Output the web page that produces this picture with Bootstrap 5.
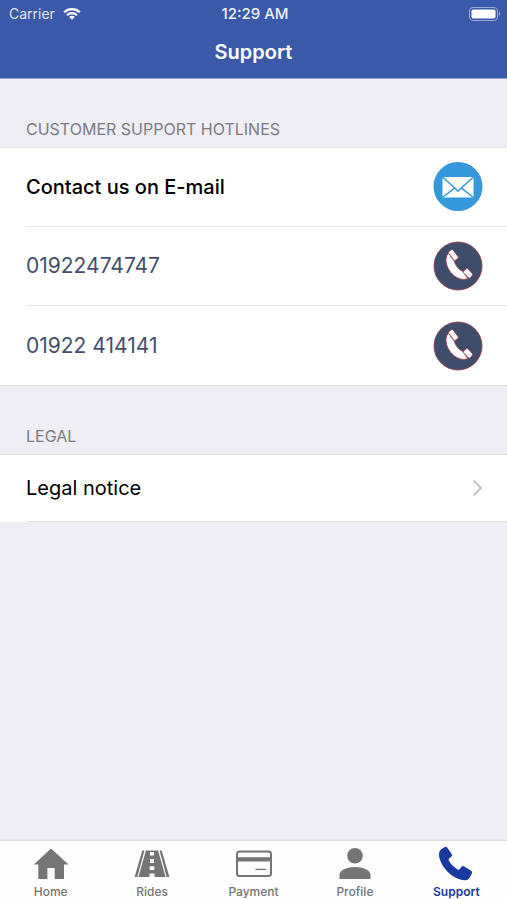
<!DOCTYPE html>
<html lang="en">
<head>
<meta charset="utf-8">
<meta name="viewport" content="width=device-width, initial-scale=1">
<title>Support</title>
<link href="https://cdn.jsdelivr.net/npm/bootstrap@5.3.0/dist/css/bootstrap.min.css" rel="stylesheet">
<style>
body { font-family: Inter, "Liberation Sans", sans-serif; background: #efeef4; color: #000; }
.app-top { background: #3a59a9; color: #fff; border-bottom: 1px solid #8f9fd0; }
.status-line { height: 28px; padding: 0 6px 0 9px; font-size: 14px; line-height: 28px; }
.status-line .carrier { color: #dfe5f6; }
.status-line .clock { font-size: 15px; font-weight: 500; color: #eef2fc; }
.screen-title { font-size: 20px; line-height: 24px; font-weight: 600; padding: 12px 0 14px; }
.group-title { font-size: 16px; line-height: 20px; font-weight: 400; color: #7c7c82; padding: 40px 26px 8px; margin: 0; }
.group-box { background: #fff; border-top: 1px solid #e2e2e6; }
.group-box a { display: block; padding-left: 26px; color: #000; text-decoration: none; font-size: 20px; line-height: 24px; }
.row-inner { height: 79px; padding-right: 24px; border-bottom: 1px solid #e6e6e8; }
.group-full li:last-child .row-inner { border-bottom: 0; }
.group-full { border-bottom: 1px solid #e2e2e6; }
.group-box .row-short { height: 67px; }
.group-box .row-email { font-weight: 500; }
.group-box a.phone { color: #444f70; font-size: 21px; }
.tabs { background: #fdfdfd; border-top: 1px solid #dcdce0; box-shadow: 0 -1px 1px #e6e6ea; }
.tabs a { color: #757575; text-decoration: none; font-size: 12px; line-height: 14px; font-weight: 500; padding: 5px 0 1px; }
.tabs a.active { color: #1739a0; font-weight: 600; }
.tabs svg { display: block; }
</style>
<script src="https://cdn.jsdelivr.net/npm/bootstrap@5.3.0/dist/js/bootstrap.bundle.min.js"></script>
</head>
<body class="d-flex flex-column min-vh-100">
<header class="app-top">
  <div class="status-line row g-0 align-items-center">
    <div class="col d-flex align-items-center gap-2">
      <span class="carrier">Carrier</span>
      <svg width="18" height="14" viewBox="0 0 18 14" fill="none" stroke="#fff" stroke-width="2.3" role="img" aria-label="Wi-Fi"><path d="M1.2 5.2a11.3 11.3 0 0 1 15.6 0M4 8.200a7.100 7.100 0 0 1 10 0"/><path d="M9 12.800 6.200 10a4 4 0 0 1 5.600 0z" fill="#fff" stroke="none"/></svg>
    </div>
    <div class="col-auto clock">12:29 AM</div>
    <div class="col d-flex justify-content-end">
      <svg width="32" height="14" viewBox="0 0 32 14" role="img" aria-label="Battery full"><rect x=".5" y=".5" width="28" height="13" rx="3.5" fill="none" stroke="#97a8d6"/><rect x="2.500" y="2.500" width="24" height="9" rx="1.800" fill="#fff"/><path d="M30 4.800c1.700.5 1.700 3.900 0 4.400z" fill="#97a8d6"/></svg>
    </div>
  </div>
  <h1 class="screen-title text-center m-0">Support</h1>
</header>

<main class="flex-grow-1">
  <h2 class="group-title">CUSTOMER SUPPORT HOTLINES</h2>
  <ul class="group-box group-full list-unstyled m-0">
    <li><a class="row-email" href="#email"><span class="row-inner d-flex align-items-center justify-content-between"><span>Contact us on E-mail</span>
      <svg width="50" height="50" viewBox="0 0 50 50" aria-hidden="true"><circle cx="25" cy="24.500" r="24.500" fill="#3498db"/><rect x="9.500" y="15" width="31" height="20.500" fill="#fff"/><path d="M9.500 15 22 26.300l3 2.900 3-2.900L40.500 15M9.500 35.500l12.300-9.700M40.500 35.500 28.200 25.800" fill="none" stroke="#3498db" stroke-width="1.500"/></svg></span></a></li>
    <li><a class="phone" href="tel:01922474747"><span class="row-inner d-flex align-items-center justify-content-between"><span>01922474747</span>
      <svg width="50" height="50" viewBox="0 0 50 50" aria-hidden="true"><circle cx="25" cy="25" r="24" fill="#3d4d6b" stroke="#91404f" stroke-width=".9"/><g id="handset" fill="#fff" stroke="#a63c4a" stroke-width=".8"><path d="M15.500 12.300C11.200 16.500 12.800 25.300 17.600 31.200c4.800 5.700 11.800 8.800 17.200 6.400l-5.100-7.300c-3.200-.8-7.800-6.200-8.300-10z"/><path d="m16 10.400 2-1.500q1.200-.8 2.100.3l4.900 6.400q.8 1.200-.4 2.100l-2 1.500q-1 .6-1.800-.4l-5.100-6.400q-.7-1 .3-2zM30.700 30l2.200-2.100q1.200-.9 2.200 0l4 4.600q.8 1.200-.1 2.200l-1.900 2.100q-1 .8-1.900-.1l-4.600-4.900q-.8-.9.1-1.800z"/></g></svg></span></a></li>
    <li><a class="phone" href="tel:01922414141"><span class="row-inner d-flex align-items-center justify-content-between"><span>01922 414141</span>
      <svg width="50" height="50" viewBox="0 0 50 50" aria-hidden="true"><circle cx="25" cy="25" r="24" fill="#3d4d6b" stroke="#91404f" stroke-width=".9"/><use href="#handset"/></svg></span></a></li>
  </ul>

  <h2 class="group-title">LEGAL</h2>
  <ul class="group-box list-unstyled m-0">
    <li><a href="#legal"><span class="row-inner row-short d-flex align-items-center justify-content-between"><span>Legal notice</span>
      <svg width="11" height="18" viewBox="0 0 11 18" fill="none" stroke="#c4c4c8" stroke-width="2" aria-hidden="true"><path d="m1.500 1.500 7.500 7.500-7.500 7.500"/></svg></span></a></li>
  </ul>
</main>

<nav class="tabs sticky-bottom row g-0 text-center" aria-label="Main">
  <a class="col d-flex flex-column align-items-center" href="#home"><svg width="36" height="39" viewBox="0 0 36 39" fill="currentColor" aria-hidden="true"><path d="M18 2.500 35.500 18.500H31V33H21.700V22h-7.300v11H5.300V18.500H.8z"/></svg>Home</a>
  <a class="col d-flex flex-column align-items-center" href="#rides"><svg width="36" height="39" viewBox="0 0 36 39" fill="currentColor" aria-hidden="true"><path d="M8.300 4.500h2.200L3.300 31H.6zM25.500 4.500h2.200L35.400 31h-2.700zM11.900 4.500h12.200L31.600 31H4.400z"/><g fill="#fdfdfd"><rect x="16" y="6" width="4" height="3.500"/><rect x="16" y="13" width="4" height="3.800"/><rect x="15.700" y="20.300" width="4.600" height="3.700"/><rect x="15.500" y="27.500" width="5" height="3.500"/></g></svg>Rides</a>
  <a class="col d-flex flex-column align-items-center" href="#payment"><svg width="36" height="39" viewBox="0 0 36 39" fill="none" stroke="currentColor" aria-hidden="true"><rect x="1" y="5.500" width="34" height="24.500" rx="2.500" stroke-width="2"/><path d="M1 13.400h34" stroke-width="4.200"/><path d="M19.500 23.400H30" stroke-width="1.300"/></svg>Payment</a>
  <a class="col d-flex flex-column align-items-center" href="#profile"><svg width="36" height="39" viewBox="0 0 36 39" fill="currentColor" aria-hidden="true"><circle cx="18" cy="9.800" r="7.800"/><path d="M2.500 33v-4.200c0-5 8-7.800 15.500-7.800s15.500 2.800 15.500 7.800V33z"/></svg>Profile</a>
  <a class="col d-flex flex-column align-items-center active" aria-current="page" href="#support"><svg width="36" height="39" viewBox="0 0 36 39" fill="currentColor" aria-hidden="true"><path d="M3 3.600 6.500 1.200q1.800-1 3 .7l4.200 6q1 1.600-.4 2.900l-2.300 1.800q-.8.800-.2 2c2 3.800 5.200 6.700 8.700 8.900q1.200.7 2.100-.3l1.700-2.300q1.200-1.500 2.900-.5l6.900 4.400q1.800 1.200.7 3L31.400 32q-1.400 2.200-4.500 2.200C15 34 1.500 20.500 1 8.500Q.8 5 3 3.600z"/></svg>Support</a>
</nav>
</body>
</html>
